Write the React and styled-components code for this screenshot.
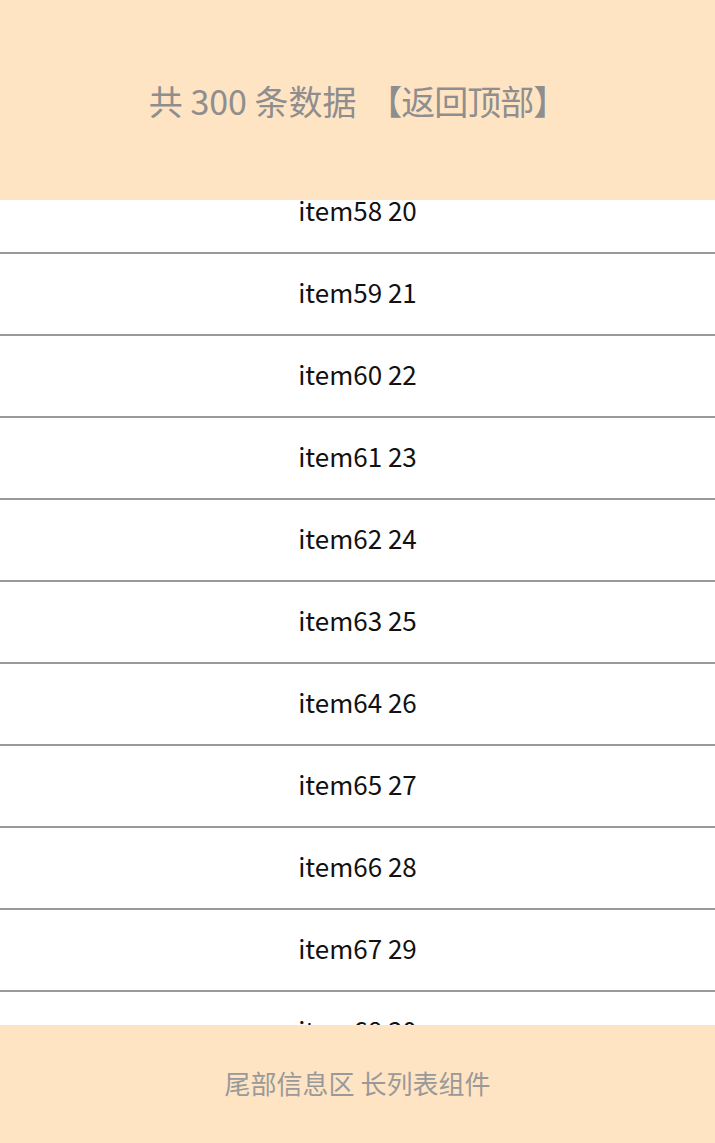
import React from 'react'
import styled, { createGlobalStyle } from 'styled-components'

const GlobalStyle = createGlobalStyle`
  html, body {
    margin: 0;
    padding: 0;
    height: 100%;
    overflow: hidden;
  }
  body {
    font-family: "Noto Sans CJK SC", "Noto Sans", sans-serif;
  }
  #root {
    height: 100%;
  }
`

const items = Array.from({ length: 11 }, (_, i) => ({ id: 58 + i, index: 20 + i }))

export default function App() {
  return (
    <>
      <GlobalStyle />
      <Page>
        <Header>
          共 300 条数据 <BackTop>【返回顶部】</BackTop>
        </Header>
        <ListView>
          <ListInner>
            {items.map((item) => (
              <Row key={item.id}>
                item{item.id} {item.index}
              </Row>
            ))}
          </ListInner>
        </ListView>
        <Footer>尾部信息区 长列表组件</Footer>
      </Page>
    </>
  )
}

const Page = styled.div`
  display: flex;
  flex-direction: column;
  height: 100vh;
  background-color: #fff;
`

const Header = styled.header`
  flex: 0 0 200px;
  display: flex;
  align-items: center;
  justify-content: center;
  background-color: #ffe4c4;
  color: #8e8e8e;
  font-size: 34px;
  white-space: pre;
`

const BackTop = styled.span`
  cursor: pointer;
  margin-left: 4px;
  letter-spacing: -1px;
`

const ListView = styled.main`
  flex: 1;
  overflow: hidden;
`

// the list is scrolled a little past item58
const ListInner = styled.div`
  margin-top: -28px;
`

const Row = styled.div`
  height: 74px;
  padding-bottom: 6px;
  display: flex;
  align-items: center;
  justify-content: center;
  border-bottom: 2px solid #999;
  color: #111;
  font-size: 26px;
`

const Footer = styled.footer`
  flex: 0 0 118px;
  box-sizing: border-box;
  padding-bottom: 4px;
  display: flex;
  align-items: center;
  justify-content: center;
  background-color: #ffe4c4;
  color: #999;
  font-size: 26px;
`
